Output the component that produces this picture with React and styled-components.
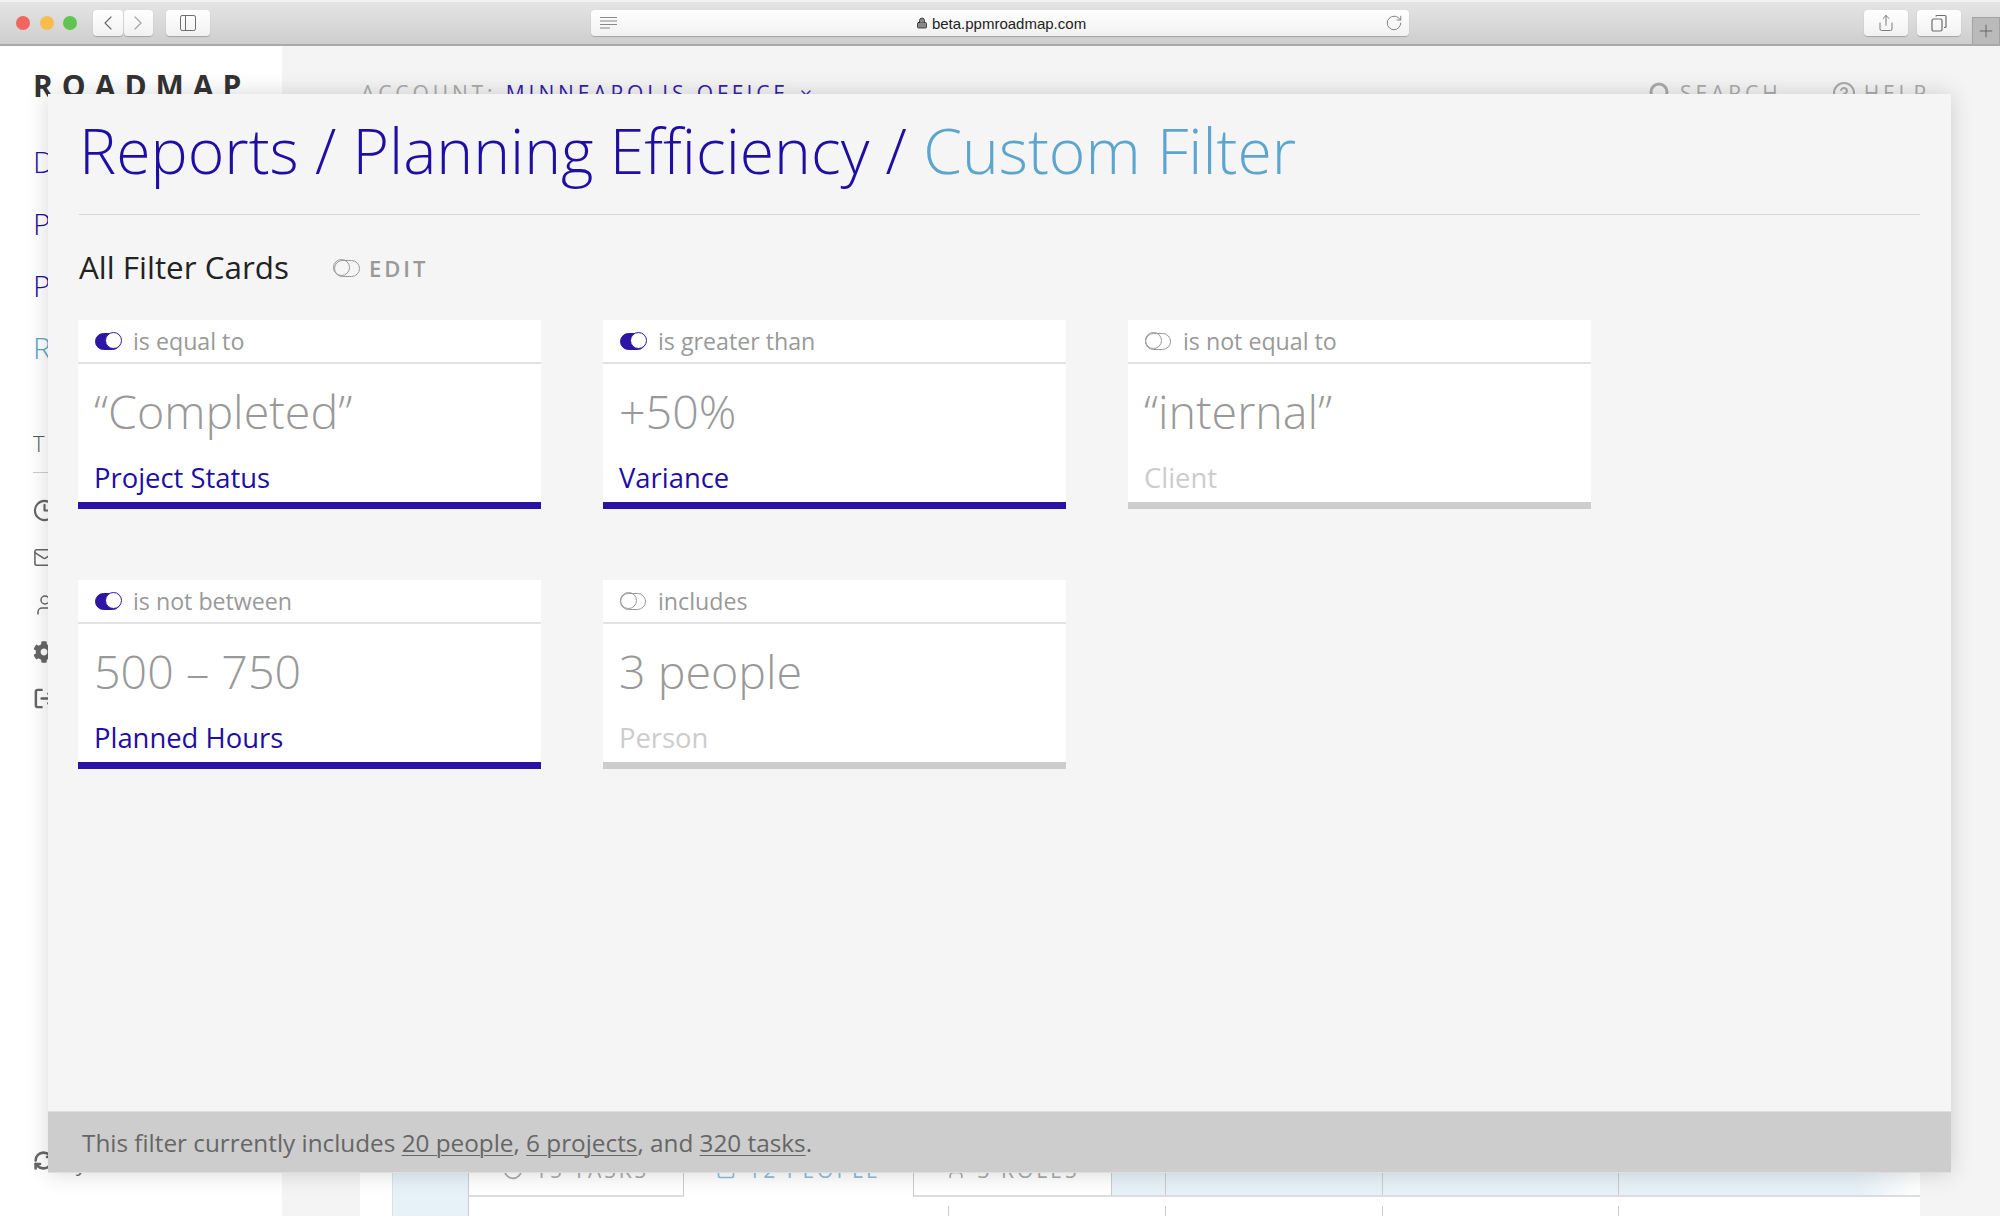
import styled, { createGlobalStyle } from "styled-components";
import {
  CheckCircle2,
  ChevronDown,
  ChevronLeft,
  ChevronRight,
  CircleHelp,
  Clock3,
  Lock,
  LogOut,
  Mail,
  PanelLeft,
  Plus,
  RefreshCw,
  RotateCw,
  Search,
  Share,
  Square,
  User,
} from "lucide-react";
import { FaCog } from "react-icons/fa";

const indigo = "#1f0ea3";
const sky = "#5ca5cf";

const filterCards = [
  { on: true, rule: "is equal to", value: "“Completed”", field: "Project Status" },
  { on: true, rule: "is greater than", value: "+50%", field: "Variance" },
  { on: false, rule: "is not equal to", value: "“internal”", field: "Client" },
  { on: true, rule: "is not between", value: "500 – 750", field: "Planned Hours" },
  { on: false, rule: "includes", value: "3 people", field: "Person" },
];

const GlobalStyle = createGlobalStyle`
  html, body {
    margin: 0;
    height: 1218px;
    overflow: hidden;
    background: #fff;
    font-family: "Open Sans", "Liberation Sans", sans-serif;
  }
`;

const Frame = styled.div`
  position: relative;
  width: 2000px;
  height: 1218px;
  box-sizing: border-box;
  padding-bottom: 2px;
  overflow: hidden;
  display: flex;
  flex-direction: column;
  background: #fff;
`;

const BrowserBar = styled.header`
  position: relative;
  height: 46px;
  flex: none;
  box-sizing: border-box;
  padding: 8px 0 0 16px;
  display: flex;
  align-items: flex-start;
  background: linear-gradient(#e4e4e4, #cecece);
  border-top: 2px solid #f2f2f2;
  border-bottom: 2px solid #a9a9a9;
`;

const Light = styled.span`
  width: 14px;
  height: 14px;
  margin: 6px 9.5px 0 0;
  border-radius: 50%;
  background: ${(p) => p.$color};
`;

const ChromeButton = styled.div`
  width: ${(p) => p.$width}px;
  height: 26px;
  margin-left: ${(p) => p.$gap}px;
  display: flex;
  align-items: center;
  justify-content: center;
  background: linear-gradient(#ffffff, #f1f1f1);
  border-radius: 4px;
  box-shadow: 0 1px 1px rgba(0, 0, 0, 0.22);
  color: ${(p) => p.$color || "#6d6d6d"};
`;

const UrlBar = styled.div`
  width: 818px;
  height: 26px;
  margin-left: 381px;
  padding: 0 6px 0 9px;
  box-sizing: border-box;
  display: flex;
  align-items: center;
  background: linear-gradient(#ffffff, #f1f1f1);
  border-radius: 4px;
  box-shadow: 0 1px 1px rgba(0, 0, 0, 0.22);
  color: #777;
`;

const UrlText = styled.div`
  flex: 1;
  display: flex;
  align-items: center;
  justify-content: center;
  gap: 4px;
  font: 15px "Liberation Sans", Arial, sans-serif;
  color: #222;
`;

const NewTab = styled.div`
  position: absolute;
  right: 0;
  bottom: 0;
  width: 28px;
  height: 27px;
  display: flex;
  align-items: center;
  justify-content: center;
  background: #bababa;
  border: 1px solid #a3a3a3;
  border-bottom: 0;
  box-sizing: border-box;
  color: #666;
`;

const Body = styled.div`
  flex: 1;
  display: flex;
  min-height: 0;
`;

const Sidebar = styled.aside`
  width: 282px;
  flex: none;
  box-sizing: border-box;
  padding: 20px 0 0 33px;
  display: flex;
  flex-direction: column;
  background: #fff;
`;

const Logo = styled.div`
  font-size: 30px;
  line-height: 40px;
  font-weight: 700;
  letter-spacing: 9px;
  color: #333;
`;

const NavList = styled.nav`
  margin-top: 25px;
  display: flex;
  flex-direction: column;
`;

const NavItem = styled.div`
  height: 62px;
  line-height: 62px;
  font-size: 30px;
  font-weight: 300;
  color: ${(p) => (p.$active ? sky : indigo)};
`;

const ToolsTitle = styled.div`
  margin-top: 49px;
  font-size: 22px;
  line-height: 30px;
  font-weight: 300;
  letter-spacing: 3px;
  color: #555;
`;

const ToolsRule = styled.div`
  height: 1px;
  margin: 14px 33px 0 0;
  background: #ccc;
`;

const ToolList = styled.div`
  margin-top: 26px;
  display: flex;
  flex-direction: column;
  gap: 24px;
  color: #666;
`;

const SyncRow = styled.div`
  margin-top: auto;
  margin-bottom: 40px;
  display: flex;
  align-items: flex-start;
  gap: 11px;
  color: #666;
`;

const SyncLabel = styled.span`
  margin-top: 2px;
  font-size: 20px;
  line-height: 24px;
`;

const Main = styled.main`
  flex: 1;
  display: flex;
  flex-direction: column;
  background: #f4f4f4;
  min-width: 0;
`;

const TopRow = styled.div`
  display: flex;
  align-items: center;
  height: 34px;
  margin-top: 30px;
  padding: 0 70px 0 79px;
  font-size: 21px;
  letter-spacing: 3.9px;
  color: #aaa;
`;

const Account = styled.span`
  flex: 1;
  display: flex;
  align-items: center;
  gap: 9px;
`;

const AccountName = styled.span`
  color: #3421a8;
`;

const TopLink = styled.span`
  display: flex;
  align-items: center;
  gap: 8px;
  margin-left: 50px;
`;

const GanttPanel = styled.div`
  margin: auto 80px 0 78px;
  height: 86px;
  display: flex;
  background: #fff;
  padding-left: 32px;
`;

const GanttHead = styled.div`
  width: 77px;
  flex: none;
  background: #e6f1f8;
  border-left: 1px solid #d8e2e8;
  border-right: 1px solid #ccc;
  box-sizing: border-box;
`;

const GanttColumn = styled.div`
  flex: 1;
  display: flex;
  flex-direction: column;
  min-width: 0;
`;

const GanttTabs = styled.div`
  height: 67px;
  display: flex;
`;

const GanttTab = styled.div`
  width: ${(p) => p.$width}px;
  height: 67px;
  box-sizing: border-box;
  padding-top: 25px;
  display: flex;
  justify-content: center;
  align-items: flex-start;
  gap: 12px;
  font-size: 21px;
  line-height: 30px;
  letter-spacing: 3px;
  color: ${(p) => (p.$active ? "#8cc0de" : "#aaa")};
  background: #fff;
  border-right: 1px solid #ccc;
  border-bottom: ${(p) => (p.$active ? "0" : "2px solid #ddd")};
  svg {
    margin-top: 5px;
  }
`;

const Timeline = styled.div`
  flex: 1;
  box-sizing: border-box;
  display: grid;
  grid-template-columns: 54px 217px 236px 1fr;
  background: linear-gradient(90deg, #e6f1f8 92%, #fff);
  border-bottom: 2px solid #ddd;
`;

const GanttCell = styled.div`
  border-right: 1px solid #ccc;
  &:last-child {
    border-right: 0;
  }
`;

const GanttTicks = styled.div`
  flex: 1;
  margin-top: 9px;
  display: grid;
  grid-template-columns: 480px 217px 217px 236px 1fr;
`;

const Modal = styled.section`
  position: absolute;
  left: 48px;
  top: 94px;
  width: 1903px;
  height: 1079px;
  display: flex;
  flex-direction: column;
  background: #f5f5f5;
  box-shadow: 0 0 22px rgba(0, 0, 0, 0.16);
`;

const ModalBody = styled.div`
  flex: 1;
  padding: 0 31px;
`;

const Title = styled.h1`
  margin: 0;
  height: 121px;
  box-sizing: border-box;
  padding-top: 12px;
  font-size: 62.5px;
  line-height: 88px;
  font-weight: 300;
  white-space: nowrap;
  color: ${indigo};
  border-bottom: 1px solid #d6d6d6;
`;

const TitleTail = styled.span`
  color: ${sky};
`;

const SectionRow = styled.div`
  display: flex;
  align-items: center;
  height: 42px;
  margin-top: 31px;
`;

const SectionTitle = styled.h2`
  margin: 0;
  font-size: 31.4px;
  line-height: 42px;
  font-weight: 400;
  color: #222;
`;

const EditButton = styled.div`
  display: flex;
  align-items: center;
  gap: 9px;
  margin: 2px 0 0 45px;
  font-size: 22px;
  font-weight: 600;
  letter-spacing: 3px;
  color: #999;
`;

const ToggleTrack = styled.span`
  position: relative;
  display: block;
  flex: none;
  width: 26px;
  height: 17px;
  box-sizing: border-box;
  border: 1.5px solid ${(p) => (p.$on ? "#2d16a6" : "#999")};
  border-radius: 9px;
  background: ${(p) => (p.$on ? "#2d16a6" : "transparent")};
`;

const ToggleKnob = styled.span`
  position: absolute;
  top: -1.5px;
  ${(p) => (p.$on ? "right: -1.5px;" : "left: -1.5px;")}
  width: 17px;
  height: 17px;
  box-sizing: border-box;
  border: 1.5px solid ${(p) => (p.$on ? "#2d16a6" : "#999")};
  border-radius: 50%;
  background: ${(p) => (p.$on ? "#fff" : "transparent")};
`;

const CardGrid = styled.div`
  display: grid;
  grid-template-columns: repeat(3, 463px);
  column-gap: 62px;
  row-gap: 71px;
  margin: 32px 0 0 -1px;
`;

const Card = styled.article`
  height: 189px;
  box-sizing: border-box;
  background: #fff;
  border-bottom: 7px solid ${(p) => (p.$on ? "#2a12a3" : "#cdcdcd")};
`;

const CardHead = styled.div`
  height: 44px;
  box-sizing: border-box;
  padding-left: 17px;
  display: flex;
  align-items: center;
  gap: 12px;
  border-bottom: 2px solid #e2e2e2;
  font-size: 23.2px;
  color: #999;
`;

const CardValue = styled.div`
  margin-top: 13px;
  padding-left: 16px;
  height: 68px;
  font-size: 46.6px;
  line-height: 68px;
  font-weight: 300;
  color: #999;
`;

const CardField = styled.div`
  padding-left: 16px;
  margin-top: 14px;
  font-size: 27.4px;
  line-height: 38px;
  color: ${(p) => (p.$on ? indigo : "#ccc")};
`;

const ModalFooter = styled.footer`
  height: 62px;
  box-sizing: border-box;
  padding-left: 34px;
  display: flex;
  align-items: center;
  background: #cdcdcd;
  border-top: 1px solid #dedede;
  border-bottom: 1px solid #dedede;
  font-size: 24.3px;
  color: #666;
  white-space: pre;
`;

const FooterLink = styled.span`
  text-decoration: underline;
  text-underline-offset: 3px;
  text-decoration-thickness: 1px;
`;

function Toggle({ on }) {
  return (
    <ToggleTrack $on={on}>
      <ToggleKnob $on={on} />
    </ToggleTrack>
  );
}

function FilterCard({ card }) {
  return (
    <Card $on={card.on}>
      <CardHead>
        <Toggle on={card.on} />
        {card.rule}
      </CardHead>
      <CardValue>{card.value}</CardValue>
      <CardField $on={card.on}>{card.field}</CardField>
    </Card>
  );
}

function ReaderIcon() {
  return (
    <svg width="18" height="14" viewBox="0 0 18 14" fill="none" stroke="#888" strokeWidth="1.2">
      <path d="M0 1.5h17M0 5h17M0 8.5h17M0 12h10" />
    </svg>
  );
}

function TabsIcon() {
  return (
    <svg width="18" height="18" viewBox="0 0 18 18" fill="none" stroke="#6d6d6d" strokeWidth="1.2">
      <rect x="2" y="5" width="10" height="12" rx="1.5" />
      <path d="M6 2.5a1 1 0 0 1 1-1h8a1 1 0 0 1 1 1v10a1 1 0 0 1-1 1h-1" />
    </svg>
  );
}

export default function App() {
  return (
    <Frame>
      <GlobalStyle />
      <BrowserBar>
        <Light $color="#f2645c" />
        <Light $color="#f9bd4e" />
        <Light $color="#5ec552" />
        <ChromeButton $width={30} $gap={6}>
          <ChevronLeft size={24} strokeWidth={1.2} />
        </ChromeButton>
        <ChromeButton $width={29} $gap={1} $color="#a5a5a5">
          <ChevronRight size={24} strokeWidth={1.2} />
        </ChromeButton>
        <ChromeButton $width={44} $gap={13}>
          <PanelLeft size={20} strokeWidth={1.2} />
        </ChromeButton>
        <UrlBar>
          <ReaderIcon />
          <UrlText>
            <Lock size={12} fill="#888" strokeWidth={1.5} />
            beta.ppmroadmap.com
          </UrlText>
          <RotateCw size={18} strokeWidth={1.2} />
        </UrlBar>
        <ChromeButton $width={44} $gap={455}>
          <Share size={18} strokeWidth={1.2} />
        </ChromeButton>
        <ChromeButton $width={44} $gap={9}>
          <TabsIcon />
        </ChromeButton>
        <NewTab>
          <Plus size={20} strokeWidth={1.2} />
        </NewTab>
      </BrowserBar>
      <Body>
        <Sidebar>
          <Logo>ROADMAP</Logo>
          <NavList>
            <NavItem>Dashboard</NavItem>
            <NavItem>Projects</NavItem>
            <NavItem>People</NavItem>
            <NavItem $active>Reports</NavItem>
          </NavList>
          <ToolsTitle>TOOLS</ToolsTitle>
          <ToolsRule />
          <ToolList>
            <Clock3 size={23} strokeWidth={2.2} />
            <Mail size={23} strokeWidth={1.6} />
            <User size={24} strokeWidth={1.5} />
            <FaCog size={22} />
            <LogOut size={23} strokeWidth={2.6} />
          </ToolList>
          <SyncRow>
            <RefreshCw size={21} strokeWidth={3} />
            <SyncLabel>Sync</SyncLabel>
          </SyncRow>
        </Sidebar>
        <Main>
          <TopRow>
            <Account>
              <span>
                ACCOUNT: <AccountName>MINNEAPOLIS OFFICE</AccountName>
              </span>
              <ChevronDown size={16} color="#3421a8" />
            </Account>
            <TopLink>
              <Search size={24} strokeWidth={3} />
              SEARCH
            </TopLink>
            <TopLink>
              <CircleHelp size={24} strokeWidth={2} />
              HELP
            </TopLink>
          </TopRow>
          <GanttPanel>
            <GanttHead />
            <GanttColumn>
              <GanttTabs>
                <GanttTab $width={215}>
                  <CheckCircle2 size={20} />
                  15 TASKS
                </GanttTab>
                <GanttTab $width={230} $active>
                  <Square size={20} />
                  12 PEOPLE
                </GanttTab>
                <GanttTab $width={198}>
                  <User size={20} />
                  3 ROLES
                </GanttTab>
                <Timeline>
                  <GanttCell />
                  <GanttCell />
                  <GanttCell />
                  <GanttCell />
                </Timeline>
              </GanttTabs>
              <GanttTicks>
                <GanttCell />
                <GanttCell />
                <GanttCell />
                <GanttCell />
                <GanttCell />
              </GanttTicks>
            </GanttColumn>
          </GanttPanel>
        </Main>
      </Body>
      <Modal>
        <ModalBody>
          <Title>
            Reports / Planning Efficiency / <TitleTail>Custom Filter</TitleTail>
          </Title>
          <SectionRow>
            <SectionTitle>All Filter Cards</SectionTitle>
            <EditButton>
              <Toggle on={false} />
              EDIT
            </EditButton>
          </SectionRow>
          <CardGrid>
            {filterCards.map((card) => (
              <FilterCard key={card.rule} card={card} />
            ))}
          </CardGrid>
        </ModalBody>
        <ModalFooter>
          This filter currently includes <FooterLink>20 people</FooterLink>, <FooterLink>6 projects</FooterLink>, and <FooterLink>320 tasks</FooterLink>.
        </ModalFooter>
      </Modal>
    </Frame>
  );
}
